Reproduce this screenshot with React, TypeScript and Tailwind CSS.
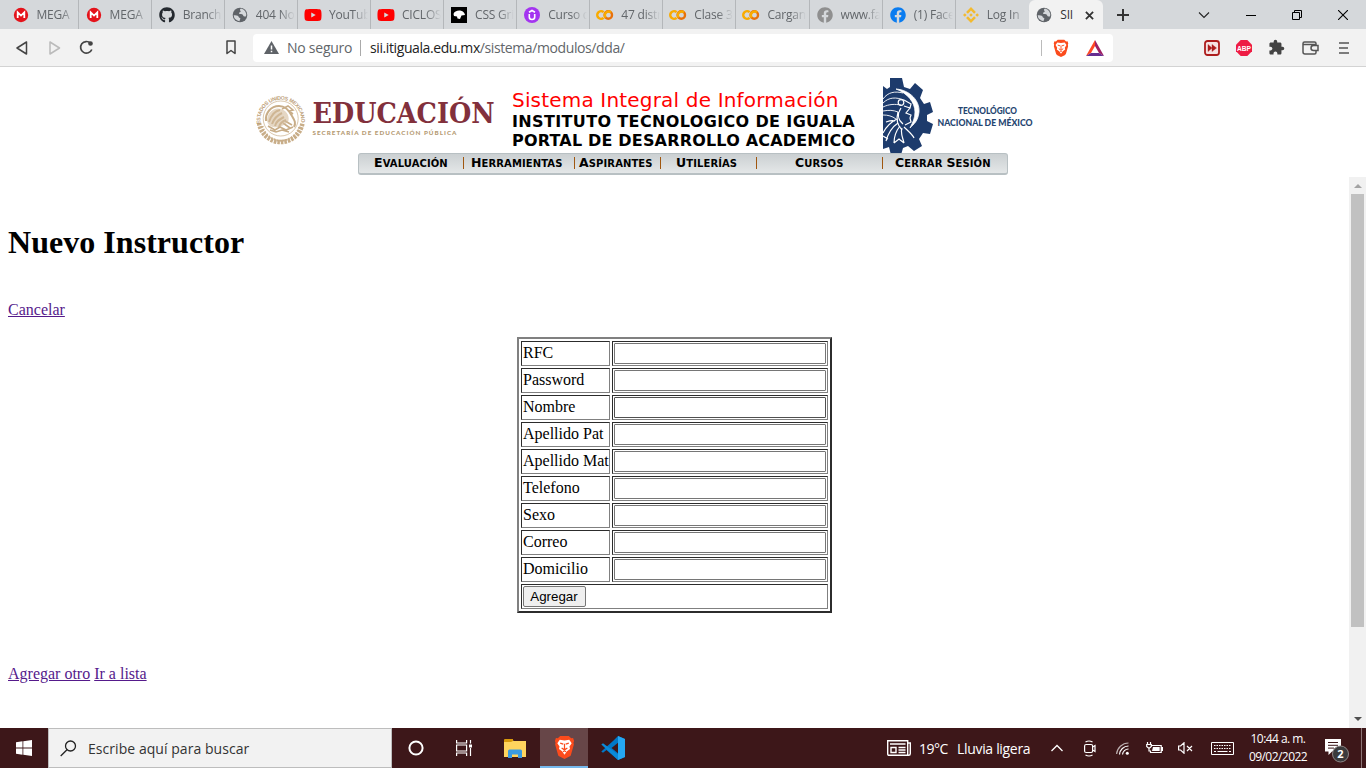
import React from "react";
import { FaGithub, FaFacebook, FaYoutube } from "react-icons/fa";
import { MdExtension } from "react-icons/md";
import { SiBinance } from "react-icons/si";

const Globe = () => (
  <svg width="16" height="16" viewBox="0 0 16 16">
    <circle cx="8" cy="8" r="7.3" fill="#5f6368" />
    <path d="M9 1.5C8 2.2 7.6 3 8.4 3.8c.8.7 0 1.6-1 1.8-.7.3-.4 1.3.3 1.4 1.8 0 3.3.2 3.5 1.6.2 1 1.5 1.2 2.9.6A6.4 6.4 0 0 0 9 1.5ZM1.7 8.2c2 0 4.8.2 5 1.7.2.9 1.3.6 1.6 1.4.3 1-.8 1.5-.7 3A6.4 6.4 0 0 1 1.7 8.2Z" fill="#d5d8db" />
  </svg>
);

const Mega = () => (
  <svg width="16" height="16" viewBox="0 0 16 16">
    <circle cx="8" cy="8" r="7.2" fill="#e4131b" />
    <path d="M4.7 11V5.3L8 8.6l3.3-3.3V11" fill="none" stroke="#fff" strokeWidth="1.8" />
  </svg>
);

const Colab = () => (
  <svg width="18" height="16" viewBox="0 0 18 16" fill="none" strokeWidth="2.4">
    <path d="M7.6 5.200a3.800 3.800 0 1 0 0 5.600" stroke="#f9ab00" />
    <circle cx="12.3" cy="8" r="3.7" stroke="#e8710a" />
    <path d="M9.700 10.600a3.700 3.700 0 0 1 5.200-5.200" stroke="#f9ab00" />
  </svg>
);

const Udemy = () => (
  <svg width="16" height="16" viewBox="0 0 16 16">
    <circle cx="8" cy="8" r="8" fill="#a435f0" />
    <path d="M5.300 7v3a2.700 2.500 0 0 0 5.400 0V7M5 5.300l3-1.800 3 1.800" fill="none" stroke="#fff" strokeWidth="1.6" />
  </svg>
);

const CssTricks = () => (
  <svg width="16" height="16" viewBox="0 0 16 16">
    <path d="M0 0h16v16H0Z" fill="#000" />
    <path d="M2.500 7C3 4.500 7 3 10 3.800c2 .5 3.700 2 4 4.200l-3.500.5L9 12l-2.500-.5L6 9.500l-3-.5Z" fill="#fff" />
  </svg>
);

const BraveLion = ({ width, height }: { width: number; height: number }) => (
  <svg width={width} height={height} viewBox="0 0 22 25" preserveAspectRatio="none">
    <path d="M6.500 1h9L18 3.500l2-.3 1 3-.6 1.800.4 2-3 10.500c-.3 1-1 1.500-1.700 2L11 25l-5.100-2.500c-.8-.5-1.400-1-1.700-2L1.200 10l.4-2L1 6.200l1-3 2 .3Z" fill="#fb4b1c" />
    <path d="M6 5l5 .6L16 5l2.500 3.500-2.300 3.500.6 2.500-3.300 2.500L11 20.500 8.500 17l-3.300-2.500.6-2.500-2.300-3.500Z" fill="#fff" />
    <path d="M6.500 8.500l3.200 1M15.500 8.500l-3.200 1M11 9v5.500M8 13.500l3 2 3-2M9.500 17.500l1.500-1 1.500 1" fill="none" stroke="#fb4b1c" strokeWidth="1.3" />
  </svg>
);

const tabs: { icon: React.ReactNode; title: string }[] = [
  { icon: <Mega />, title: "MEGA" },
  { icon: <Mega />, title: "MEGA" },
  { icon: <FaGithub size={16} color="#24292f" />, title: "Branches" },
  { icon: <Globe />, title: "404 Not" },
  { icon: <FaYoutube size={18} color="#ff0000" />, title: "YouTube" },
  { icon: <FaYoutube size={18} color="#ff0000" />, title: "CICLOS" },
  { icon: <CssTricks />, title: "CSS Grid" },
  { icon: <Udemy />, title: "Curso de" },
  { icon: <Colab />, title: "47 distri" },
  { icon: <Colab />, title: "Clase 3" },
  { icon: <Colab />, title: "Cargand" },
  { icon: <FaFacebook size={16} color="#8f8f8f" />, title: "www.fac" },
  { icon: <FaFacebook size={16} color="#0a7cf0" />, title: "(1) Face" },
  { icon: <SiBinance size={16} color="#f3ba2f" />, title: "Log In" },
];

const TabStrip = () => (
  <div className="flex h-[29px] bg-[#d5d8db] pl-[5.500px] font-['Open_Sans',sans-serif] text-[12px] text-[#62666a]">
    {tabs.map((t, i) => (
      <div
        key={i}
        className={`flex h-[29px] w-[73.100px] shrink-0 items-center overflow-hidden pl-[6px] pt-px ${i < 13 ? "border-r border-[#b4b7ba]" : ""}`}
      >
        <span className="flex w-[18px] shrink-0 justify-center">{t.icon}</span>
        <span className="ml-[7px] w-[39px] overflow-hidden whitespace-nowrap tracking-[-0.200px] [mask-image:linear-gradient(to_right,#000_60%,transparent)]">
          {t.title}
        </span>
      </div>
    ))}
    <div className="flex w-[74px] shrink-0 items-center rounded-t-[6px] bg-[#f2f2f2] pl-[6.500px] pt-px text-[#333]">
      <span className="flex w-[18px] justify-center"><Globe /></span>
      <span className="ml-[7px] w-[25px] tracking-[-0.200px]">SII</span>
      <svg width="9" height="9" viewBox="0 0 10 10" stroke="#333" strokeWidth="2"><path d="M1 1l8 8M9 1L1 9" /></svg>
    </div>
    <svg className="ml-[14px] mt-[9px] shrink-0" width="12" height="12" viewBox="0 0 12 12" stroke="#333" strokeWidth="2"><path d="M6 0v12M0 6h12" /></svg>
    <div className="ml-auto flex shrink-0 items-center gap-[36px] pr-[18px]">
      <svg width="12" height="10" viewBox="0 0 12 10" fill="none" stroke="#222" strokeWidth="1.1"><path d="M1 2.500l5 5 5-5" /></svg>
      <svg width="10" height="10" viewBox="0 0 10 10" stroke="#000"><path d="M0 5.500h10" /></svg>
      <svg width="10" height="10" viewBox="0 0 10 10" fill="none" stroke="#000"><path d="M.5 2.500h7v7h-7ZM2.500 2.500v-2h7v7h-2" /></svg>
      <svg width="10" height="10" viewBox="0 0 10 10" stroke="#000" strokeWidth="1.1"><path d="M0 0l10 10M10 0L0 10" /></svg>
    </div>
  </div>
);

const Toolbar = () => (
  <div className="flex h-[38px] items-center border-b border-[#d3d3d3] bg-[#f2f2f2] font-['Open_Sans',sans-serif] text-[14px]">
    <svg className="ml-[16px]" width="12" height="14" viewBox="0 0 12 14" fill="none" stroke="#444" strokeWidth="1.5" strokeLinejoin="round"><path d="M10.500 1v12L1 7Z" /></svg>
    <svg className="ml-[21px]" width="12" height="14" viewBox="0 0 12 14" fill="none" stroke="#bbb" strokeWidth="1.5" strokeLinejoin="round"><path d="M1 1v12l9.500-6Z" /></svg>
    <svg className="ml-[18px]" width="15" height="15" viewBox="0 0 15 15" fill="none" stroke="#444" strokeWidth="1.7"><path d="M12.800 9.500A5.800 5.800 0 1 1 11.500 3.200" /><circle cx="11.500" cy="3.500" r="1.500" fill="#444" /></svg>
    <svg className="ml-[132px]" width="10" height="15" viewBox="0 0 10 15" fill="none" stroke="#444" strokeWidth="1.5" strokeLinejoin="round"><path d="M1 1h8v12.500L5 10.500l-4 3Z" /></svg>
    <div className="ml-[17px] flex h-[28px] w-[860px] items-center rounded-[4px] bg-white">
      <svg className="ml-[11px]" width="15" height="13" viewBox="0 0 15 13"><path d="M7.500 0L15 13H0Z" fill="#5f6368" /><path d="M7.500 4.500v4M7.500 9.700v1.500" stroke="#fff" strokeWidth="1.5" /></svg>
      <span className="ml-[8px] w-[65px] whitespace-nowrap tracking-[-0.250px] text-[#62666a]">No seguro</span>
      <span className="ml-[8px] h-[16px] w-px bg-[#aaa]" />
      <span className="ml-[9px] whitespace-nowrap tracking-[-0.400px] text-[#62666a]"><span className="text-[#222]">sii.itiguala.edu.mx</span>/sistema/modulos/dda/</span>
      <span className="ml-auto h-[16px] w-px bg-[#bbb]" />
      <span className="ml-[11px]"><BraveLion width={16} height={18} /></span>
      <svg className="ml-[17px] mr-[9px]" width="18" height="16" viewBox="0 0 18 16"><path d="M9 0L0 16l5-3L9 6Z" fill="#ff4724" /><path d="M9 0l9 16-5-3L9 6Z" fill="#9e1f63" /><path d="M0 16l5-3h8l5 3Z" fill="#662d91" /></svg>
    </div>
    <svg className="ml-[91px]" width="16" height="16" viewBox="0 0 16 16"><rect x="1" y="1" width="14" height="14" rx="2.5" fill="#f5e3e3" stroke="#ad1d1d" strokeWidth="1.8" /><path d="M4 4.500L8 8l-4 3.500ZM8 4.500L12.500 8 8 11.500Z" fill="#ad1d1d" stroke="#ad1d1d" strokeWidth=".4" /></svg>
    <svg className="ml-[16px]" width="16" height="16" viewBox="0 0 16 16"><path d="M4.700 0h6.600L16 4.700v6.600L11.300 16H4.700L0 11.300V4.700Z" fill="#ee1c44" /><text x="8" y="10.6" textAnchor="middle" textLength="14" lengthAdjust="spacingAndGlyphs" fontSize="7.5" fontWeight="700" fontFamily="Liberation Sans, sans-serif" fill="#fff">ABP</text></svg>
    <MdExtension className="ml-[16px]" size={17} color="#444" />
    <svg className="ml-[17px]" width="17" height="14" viewBox="0 0 17 14" fill="none" stroke="#555" strokeWidth="1.5"><path d="M14 4V2.500Q14 1 12.500 1H2.500Q1 1 1 2.500v8.500Q1 13 3 13h9.500Q14 13 14 11.500V10M1.500 3.500H14M16 4.500h-4.500a2.500 2.500 0 0 0 0 5H16Z" /></svg>
    <svg className="ml-[20px]" width="10" height="12" viewBox="0 0 10 12" stroke="#555" strokeWidth="1.7"><path d="M0 1h10M0 6h9M0 11h10" /></svg>
  </div>
);

const EducacionLogo = () => (
  <svg width="240" height="54" viewBox="0 0 240 54">
    <defs>
      <path id="sealArc" d="M5.500 32A20.500 21 0 1 1 46 32" />
    </defs>
    <g fill="none" stroke="#c8ad88">
      <path d="M4 31A22 22.500 0 0 0 47.500 31" strokeWidth="4.5" strokeDasharray="2.500 1" />
      <path d="M7.500 34A19 19 0 0 0 44.500 34" strokeWidth="2" strokeDasharray="1.500 1.500" />
      <circle cx="25.7" cy="26.5" r="17.5" strokeWidth=".7" />
      <path d="M11 29c-1-8 5-15 13-15 6 0 10 4 13 10 3 5 4 7 2 11M14 30c2-6 5-11 11-12M17 32c2-6 6-9 10-11M20 34c1-5 5-7 9-9M24 35c1-4 4-6 7-7" strokeWidth="2" />
      <path d="M27 17l6-3 5 4-4 1 4 3M13 34l7 4 5-3 6 3 7-3M15 38l6 2 6-2 7 2M30 29l7 4M28 31l7 5" strokeWidth="1.6" />
    </g>
    <path d="M12 28c1-9 8-13 14-11 7 2 9 9 7 13-4 4-10 6-15 5-4-1-6-4-6-7Z" fill="#d4bd9c" opacity=".6" />
    <text fontSize="5.3" fontWeight="700" fontFamily="Liberation Sans, sans-serif" fill="#bda078">
      <textPath href="#sealArc" textLength="73">ESTADOS UNIDOS MEXICANOS</textPath>
    </text>
    <text x="57.5" y="30.8" textLength="182" lengthAdjust="spacingAndGlyphs" fontSize="27.5" fontWeight="700" fontFamily="DejaVu Serif, serif" fill="#82303c">EDUCACIÓN</text>
    <text x="57.5" y="43.2" textLength="144" fontSize="6.3" fontWeight="900" fontFamily="Lato, sans-serif" fill="#b59b74">SECRETARÍA DE EDUCACIÓN PÚBLICA</text>
  </svg>
);

const TecnmLogo = () => (
  <svg width="152" height="75" viewBox="0 0 152 75">
    <path d="M0 8l4 3 3-2V0h12l2 9 6 2 5-6 8 7-3 8 4 6 6-2 3 10-6 3v6l6 3-3 10-7-1-4 6 3 7-8 5-6-5-5 2-2 7H8l-2-8-6 2V8Z" fill="#1d3b6c" />
    <g fill="none" stroke="#fff">
      <path d="M13 11c14 1 24 12 23 23-1 9-5 12-9 16 3-6 5-10 5-16 0-10-8-19-19-23Z" fill="#fff" strokeWidth=".8" />
      <path d="M0 21c5-7 12-8 20-6M0 25c6-6 13-6 21-3M0 29c6-3 12-3 18-2M0 33c6-1 10-1 15 1M0 37c5 0 9 1 13 4" strokeWidth=".9" />
      <circle cx="18" cy="24.5" r="2.8" strokeWidth="1.2" />
      <path d="M21 22l7 4-1 4-6-2M27 30l-4 5 5 2-1 3 1 4-6 3M18 30c-4 6-3 12 2 16M15 34c-2 7-1 13 4 18" strokeWidth="1.2" />
      <path d="M14 41C8 44 3 49 0 55M15 45C9 49 5 56 3 63M17 48c-4 5-6 11-6 17M19 50c-2 5 1 10 2 15M21 49c4 4 9 8 10 11M3 44c3-1 6-2 9-1M11 65l5-4 5 4M0 58l5 3" strokeWidth="1.2" />
    </g>
    <g fontFamily="Lato, sans-serif" fontWeight="900" fontSize="10" fill="#24446f">
      <text x="75" y="36" textLength="59" lengthAdjust="spacingAndGlyphs">TECNOLÓGICO</text>
      <text x="54.5" y="48" textLength="95" lengthAdjust="spacingAndGlyphs">NACIONAL DE MÉXICO</text>
    </g>
  </svg>
);

const menu = [
  { label: "Evaluación", cls: "w-[105px] pl-[15px]" },
  { label: "Herramientas", cls: "w-[111px] pl-[7px]" },
  { label: "Aspirantes", cls: "w-[86px] pl-[4px]" },
  { label: "Utilerías", cls: "w-[96px] pl-[15px]" },
  { label: "Cursos", cls: "w-[126px] pl-[38px]" },
  { label: "Cerrar Sesión", cls: "w-[124px] pl-[12px]" },
];

const Header = () => (
  <header className="h-[110px] pt-[11px] font-['DejaVu_Sans',sans-serif]">
    <div className="flex h-[75px] pl-[255px]">
      <div className="w-[257px] pt-[14px]"><EducacionLogo /></div>
      <div className="w-[371px] whitespace-nowrap pt-[9px] text-black">
        <div className="h-[25px] text-[20px] leading-[26px] tracking-[0.180px] text-[#f00]">Sistema Integral de Información</div>
        <div className="h-[19px] text-[16px] font-bold leading-[19px] tracking-[0.360px]">INSTITUTO TECNOLOGICO DE IGUALA</div>
        <div className="h-[19px] text-[16px] font-bold leading-[19px] tracking-[0.180px]">PORTAL DE DESARROLLO ACADEMICO</div>
      </div>
      <TecnmLogo />
    </div>
    <nav className="ml-[358px] flex h-[22px] w-[650px] overflow-hidden rounded-[3px] border border-b-2 border-[#b8c0c3] bg-linear-to-b from-[#cbd0d2] to-[#e4e7e8] text-[14.200px] font-bold leading-[17px] tracking-[0.100px] text-black [font-variant:small-caps]">
      {menu.map((m, i) => (
        <div key={m.label} className={`flex shrink-0 items-start whitespace-nowrap ${m.cls}`}>
          <span className="flex gap-[4px]">
            {m.label.split(" ").map((word) => (
              <span key={word} className="block first-letter:text-[12.500px]">{word}</span>
            ))}
          </span>
          {i < 5 && <span className="ml-auto mt-[3px] h-[12px] w-px bg-[#a0570f]" />}
        </div>
      ))}
    </nav>
  </header>
);

const fields = ["RFC", "Password", "Nombre", "Apellido Pat", "Apellido Mat", "Telefono", "Sexo", "Correo", "Domicilio"];

const cell = "h-[25px] border border-t-[#2c2c2c] border-l-[#2c2c2c] border-r-[#808080] border-b-[#808080] p-px";

const Content = () => (
  <main className="flex h-[551px] font-['Liberation_Serif',serif] text-[16px] leading-[18px] text-black">
    <div className="flex w-[1349px] flex-col pl-[8px] pt-[47px]">
      <h1 className="text-[32px] font-bold leading-[37px] tracking-[0.040px]">Nuevo Instructor</h1>
      <a className="mt-[40px] self-start text-[#551a8b] underline">Cancelar</a>
      <form className="mt-[18px] ml-[509px] grid w-[315px] grid-cols-[89px_216px] gap-[2px] border-2 border-t-[#808080] border-l-[#808080] border-r-[#2c2c2c] border-b-[#2c2c2c] p-[2px]">
        {fields.map((f) => (
          <React.Fragment key={f}>
            <label className={`${cell} whitespace-nowrap pt-[2px]`}>{f}</label>
            <div className={cell}>
              <input className={`block h-[21px] w-full rounded-[1px] border bg-white outline-none ${f === "Nombre" ? "border-[#505050]" : "border-[#767676]"}`} />
            </div>
          </React.Fragment>
        ))}
        <div className={`${cell} col-span-2`}>
          <button type="button" className="block h-[21px] w-[63px] rounded-[2px] border border-[#767676] bg-[#efefef] pr-px font-['Liberation_Sans',sans-serif] text-[13.333px] leading-[18px]">Agregar</button>
        </div>
      </form>
      <div className="mt-[52px] flex gap-[4px] text-[#551a8b]">
        <a className="underline">Agregar otro</a>
        <a className="underline">Ir a lista</a>
      </div>
    </div>
    <div className="flex w-[17px] flex-col items-center justify-between bg-[#f1f1f1] py-[7px]">
      <svg width="8" height="4" viewBox="0 0 8 4" className="shrink-0"><path d="M0 4l4-4 4 4Z" fill="#a3a3a3" /></svg>
      <div className="mt-[6px] mb-auto h-[433px] w-[13px] bg-[#c1c1c1]" />
      <svg width="8" height="4" viewBox="0 0 8 4" className="shrink-0"><path d="M0 0l4 4 4-4Z" fill="#505050" /></svg>
    </div>
  </main>
);

const Taskbar = () => (
  <footer className="flex h-[40px] bg-[#3d1719] font-['Open_Sans',sans-serif] text-white">
    <div className="flex w-[48px] items-center justify-center">
      <svg width="16" height="16" viewBox="0 0 16 16" fill="#fff"><path d="M0 2.200L6.500 1.300v6.300H0ZM7.300 1.200L16 0v7.600H7.300ZM0 8.400h6.500v6.300L0 13.800ZM7.300 8.400H16V16l-8.700-1.200Z" /></svg>
    </div>
    <div className="flex w-[344px] items-center border border-[#bdbdbd] bg-[#f2f2f2] text-[14px] text-[#333]">
      <svg className="ml-[11px]" width="17" height="17" viewBox="0 0 17 17" fill="none" stroke="#222" strokeWidth="1.3"><circle cx="10.5" cy="6" r="5" /><path d="M7 9.700L.7 16" /></svg>
      <span className="ml-[11px] whitespace-nowrap tracking-[0.050px]">Escribe aquí para buscar</span>
    </div>
    <div className="flex w-[48px] items-center justify-center">
      <svg width="16" height="16" viewBox="0 0 16 16"><circle cx="8" cy="8" r="6.6" fill="none" stroke="#fff" strokeWidth="2" /></svg>
    </div>
    <div className="flex w-[48px] items-center justify-center">
      <svg width="16" height="16" viewBox="0 0 16 16" fill="none" stroke="#fff" strokeWidth="1.2"><path d="M.6 0v3h10V0M.6 16v-3h10v3M.6 5h10v6H.6ZM14.500 0v3.500M14.500 8v8" /><path d="M13 4.500h3v3h-3Z" fill="#fff" stroke="none" /></svg>
    </div>
    <div className="flex w-[52px] items-center justify-center pl-px">
      <svg width="22" height="19" viewBox="0 0 22 19"><path d="M0 1h8l2 1h12v16H0Z" fill="#ffd45e" /><path d="M0 1q0-1 1-1h8v2L7 3H0Z" fill="#d99a0b" /><path d="M4 19v-7q0-1.500 1.500-1.500h11Q18 10.500 18 12v7h-4v-3.500H8V19Z" fill="#3a9be0" /></svg>
    </div>
    <div className="flex w-[48px] items-center justify-center border-b-2 border-[#76b9ed] bg-[#674648]"><BraveLion width={21} height={24} /></div>
    <div className="flex w-[50px] items-center justify-center">
      <svg width="24" height="24" viewBox="0 0 24 24"><path d="M17 0L24 3v18l-7 3L5.500 14 2 16.800.3 15.600 12 5Z" fill="#0078c8" /><path d="M.3 8.400L2 7.200 17 18.500V24L.3 8.400Z" fill="#0a8ad8" /><path d="M17 0l7 3v18l-7 3Z" fill="#25a7f2" /><path d="M17 6.800v10.400L10.500 12Z" fill="#3d1719" /></svg>
    </div>
    <div className="ml-auto flex items-center">
      <svg width="24" height="16" viewBox="0 0 24 16" fill="none" stroke="#fff" strokeWidth="1.4"><path d="M.7.700h20v14.600H2Q.7 15.300.7 14ZM20.700 3H23.300v10.500q0 1.800-1.600 1.800h-2M3 4h15.500" /><path d="M4 7.500h5v5H4ZM11.500 7.500h7M11.500 10h7M11.500 12.500h7" /></svg>
      <span className="ml-[8px] w-[29px] whitespace-nowrap text-[14px] tracking-[-0.500px]">19°C</span>
      <span className="ml-[9px] w-[73px] whitespace-nowrap text-[14px] tracking-[-0.320px]">Lluvia ligera</span>
      <svg className="ml-[21px]" width="12" height="8" viewBox="0 0 12 8" fill="none" stroke="#fff" strokeWidth="1.3"><path d="M.5 7L6 1.500 11.500 7" /></svg>
      <svg className="ml-[21px]" width="12" height="17" viewBox="0 0 12 17" fill="none" stroke="#fff" strokeWidth="1.2"><path d="M1.500 2Q5 0 8.500 2M1.500 15Q5 17 8.500 15" /><rect x=".6" y="4.5" width="8" height="8" rx="1.5" /><path d="M8.600 7l2.400-1.500v6L8.600 10" /></svg>
      <svg className="ml-[20px]" width="13" height="13" viewBox="0 0 13 13" fill="none" stroke="#fff" strokeWidth="1.2"><path d="M.6 12A12 12 0 0 1 12.500 1" opacity=".65" /><path d="M3.500 12.500A9 9 0 0 1 12.500 4M6.500 12.500a6 6 0 0 1 6-5.500" /><circle cx="11.3" cy="11.3" r="1.5" fill="#fff" stroke="none" /></svg>
      <svg className="ml-[17px]" width="17" height="12" viewBox="0 0 17 12" fill="none" stroke="#fff" strokeWidth="1.2"><path d="M5.500 3.500h9.700v7H4.500V8.500M15.200 5.500h1.200v3h-1.200M1.500 0v2M4.500 0v2M.7 2.500h4.600v2L3 6.500l-2.300-2ZM3 6v3h1.500" /><path d="M7 5h6.700v4H6Z" fill="#fff" stroke="none" /></svg>
      <svg className="ml-[15px]" width="15" height="12" viewBox="0 0 15 12" fill="none" stroke="#fff" strokeWidth="1.2"><path d="M.6 4h2L6 .8v10.400L2.600 8h-2ZM9 4l5 5M14 4L9 9" /></svg>
      <svg className="ml-[18px]" width="23" height="13" viewBox="0 0 23 13" fill="none" stroke="#fff"><path d="M.5.500h22v12H.5Z" /><path d="M3 3.500h17M3 6.500h17" strokeDasharray="1.500 1" /><path d="M3 9.500h2M6.500 9.500h10M18 9.500h2" /></svg>
      <div className="ml-[14px] w-[60px] whitespace-nowrap text-center text-[12px] leading-[18px] tracking-[-0.550px]">
        <div>10:44 a. m.</div>
        <div>09/02/2022</div>
      </div>
      <svg className="ml-[17px] mt-[5px]" width="24" height="24" viewBox="0 0 24 24"><path d="M0 0h16v12.500H7L3.500 16v-3.500H0Z" fill="#fff" /><path d="M3 3.500h10M3 6.300h10M3 9.100h6" stroke="#3d1719" /><circle cx="15.5" cy="15" r="8" fill="#3b3b3d" stroke="#8d8585" /><text x="15.5" y="19" textAnchor="middle" fontSize="11" fontWeight="700" fontFamily="Open Sans, sans-serif" fill="#fff">2</text></svg>
      <span className="ml-[12px] mr-[4px] h-[40px] w-px bg-[#8c7475]" />
    </div>
  </footer>
);

export default function App() {
  return (
    <div className="flex h-[768px] w-[1366px] flex-col overflow-hidden bg-white">
      <TabStrip />
      <Toolbar />
      <Header />
      <Content />
      <Taskbar />
    </div>
  );
}
